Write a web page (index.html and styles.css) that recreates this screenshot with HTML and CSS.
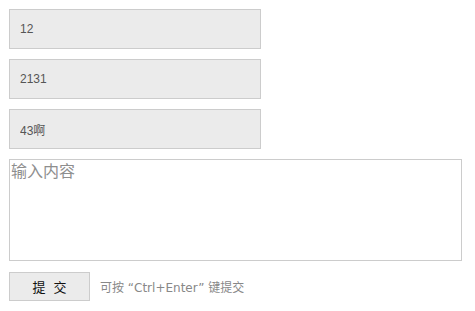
FILE: index.html
```html
<!DOCTYPE html>
<html>
<head>
<meta charset="utf-8">
<link rel="stylesheet" href="styles.css">
</head>
<body>
<form class="form">
  <input class="field" type="text" value="12">
  <input class="field" type="text" value="2131">
  <input class="field" type="text" value="43啊">
  <div class="area-wrap">
    <textarea class="area" placeholder="输入内容" autofocus></textarea>
    <span class="grip"></span>
  </div>
  <div class="actions">
    <button type="button" class="submit">提 交</button>
    <span class="hint">可按 “Ctrl+Enter” 键提交</span>
  </div>
</form>
</body>
</html>
```
FILE: styles.css
```css
html, body {
  margin: 0;
  padding: 0;
  background: #fff;
}
body {
  padding: 9px;
  font-family: "Liberation Sans", "Noto Sans CJK SC", sans-serif;
}
.form {
  display: flex;
  flex-direction: column;
  align-items: flex-start;
}
.field {
  box-sizing: border-box;
  width: 252px;
  height: 40px;
  margin: 0 0 10px 0;
  padding: 0 10px;
  border: 1px solid #cccccc;
  background: #ebebeb;
  color: #555;
  font-family: "Liberation Sans", "Noto Sans CJK SC", sans-serif;
  font-size: 12px;
  outline: none;
}
.area-wrap {
  position: relative;
  width: 453px;
  height: 102px;
}
.area {
  box-sizing: border-box;
  width: 453px;
  height: 102px;
  margin: 0;
  padding: 1px 1px;
  border: 1px solid #cccccc;
  background: #fff;
  resize: none;
  font-family: "Noto Sans CJK SC", sans-serif;
  font-size: 16px;
  line-height: 18px;
  color: #333;
  caret-color: #000;
  outline: none;
}
.area::placeholder {
  color: #8e8e8e;
}
.grip {
  position: absolute;
  right: 2px;
  bottom: 2px;
  width: 10px;
  height: 10px;
  background:
    radial-gradient(circle, #b5b5b5 45%, transparent 50%) 8px 0 / 2px 2px no-repeat,
    radial-gradient(circle, #b5b5b5 45%, transparent 50%) 4px 4px / 2px 2px no-repeat,
    radial-gradient(circle, #b5b5b5 45%, transparent 50%) 8px 4px / 2px 2px no-repeat,
    radial-gradient(circle, #b5b5b5 45%, transparent 50%) 0 8px / 2px 2px no-repeat,
    radial-gradient(circle, #b5b5b5 45%, transparent 50%) 4px 8px / 2px 2px no-repeat,
    radial-gradient(circle, #b5b5b5 45%, transparent 50%) 8px 8px / 2px 2px no-repeat;
}
.actions {
  display: flex;
  align-items: center;
  margin-top: 11px;
}
.submit {
  box-sizing: border-box;
  width: 81px;
  height: 29px;
  margin: 0;
  padding: 0;
  border: 1px solid #cccccc;
  background: #ebebeb;
  color: #111;
  font-family: "Noto Sans CJK SC", sans-serif;
  font-size: 13px;
  word-spacing: 5px;
  cursor: pointer;
}
.hint {
  margin-left: 10px;
  color: #888;
  font-size: 12px;
  font-family: "DejaVu Sans", "Noto Sans CJK SC", sans-serif;
}
```
